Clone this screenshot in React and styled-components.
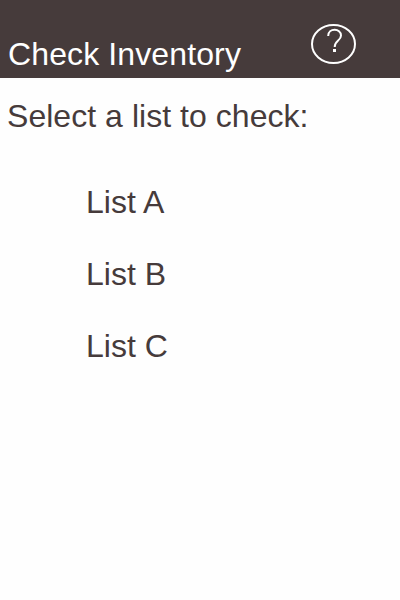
import React from 'react';
import styled, { createGlobalStyle } from 'styled-components';

const GlobalStyle = createGlobalStyle`
  body { margin: 0; background: #fefefe; }
`;

const Screen = styled.div`
  min-height: 600px;
  background: #fefefe;
  color: #463b3b;
  font: 32px/36px "Liberation Sans", Arial, sans-serif;
`;

const Header = styled.header`
  display: flex;
  align-items: flex-start;
  justify-content: space-between;
  box-sizing: border-box;
  height: 78px;
  padding: 24px 44px 0 8px;
  background: #463b3b;
  color: #fff;
`;

const Title = styled.h1`
  margin: 12px 0 0;
  font: inherit;
  letter-spacing: 0.12px;
`;

const HelpButton = styled.button`
  display: flex;
  padding: 0;
  border: 0;
  background: none;
  color: inherit;
`;

const Prompt = styled.p`
  margin: 0;
  padding: 20px 8px 0 7px;
  letter-spacing: 0.04px;
`;

const Lists = styled.ul`
  display: grid;
  gap: 36px;
  margin: 50px 0 0;
  padding: 0 0 0 86px;
  list-style: none;
`;

const ListItem = styled.li`
  height: 36px;
`;

const lists = ['List A', 'List B', 'List C'];

export default function App() {
  return (
    <Screen>
      <GlobalStyle />
      <Header>
        <Title>Check Inventory</Title>
        <HelpButton aria-label="Help">
          <svg width="45" height="40" viewBox="0 0 45 40" fill="none" stroke="currentColor">
            <ellipse cx="22.5" cy="20" rx="21.5" ry="19" strokeWidth="2" />
            <path d="M17.2 12C17.2 3.8 30 3.8 30 11.5C30 17 23.7 16 23.7 23" strokeWidth="2" />
            <path d="M22 25h3v3h-3z" fill="currentColor" stroke="none" />
          </svg>
        </HelpButton>
      </Header>
      <Prompt>Select a list to check:</Prompt>
      <Lists>
        {lists.map((name) => <ListItem key={name}>{name}</ListItem>)}
      </Lists>
    </Screen>
  );
}
